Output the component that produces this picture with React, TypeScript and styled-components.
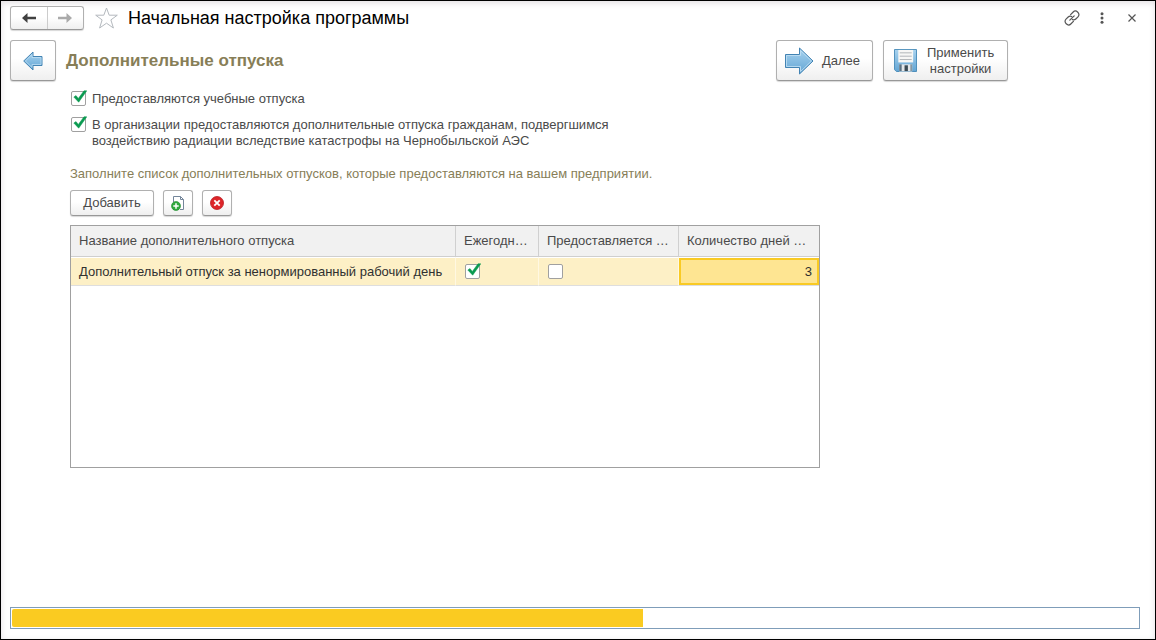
import React, { useState } from "react";
import styled, { createGlobalStyle, css } from "styled-components";

const GlobalStyle = createGlobalStyle`
  *, *::before, *::after { box-sizing: border-box; }
  body { margin: 0; background: #fff; }
  body, button, input { font-family: "Liberation Sans", Arial, sans-serif; font-size: 13px; line-height: 16px; color: #4a4a4a; }
`;

const Window = styled.div`
  display: flex;
  flex-direction: column;
  min-height: 100vh;
  padding: 5px 15px 10px 9px;
  border: 1px solid #000;
  background: #fff;
  box-shadow: inset 0 2px 6px #e2dfe2;
`;

const TitleBar = styled.header`
  display: flex;
  align-items: center;
  height: 24px;
`;

const buttonFace = css`
  border: 1px solid #b0b0b0;
  border-bottom-color: #989898;
  border-radius: 3px;
  background: linear-gradient(#fff 45%, #efefef);
  box-shadow: 0 1px 1px #d8d8d8;
  cursor: pointer;
`;

const History = styled.nav`
  ${buttonFace}
  display: flex;
  width: 74px;
  height: 24px;
`;

const HistoryButton = styled.button`
  display: flex;
  flex: 1;
  align-items: center;
  justify-content: center;
  padding: 0;
  border: 0;
  background: none;
  & + & { border-left: 1px solid #ccc; }
`;

const PlainButton = styled.button`
  display: flex;
  align-items: center;
  justify-content: center;
  width: 24px;
  height: 24px;
  padding: 0;
  border: 0;
  background: none;
`;

const Favorite = styled(PlainButton)`
  margin-left: 11px;
`;

const Title = styled.h1`
  flex: 1;
  margin: 0 0 0 9px;
  font-size: 18px;
  line-height: 24px;
  font-weight: normal;
  color: #000;
`;

const WindowTools = styled.div`
  display: flex;
  gap: 6px;
  margin-right: -4px;
`;

const Toolbar = styled.div`
  display: flex;
  align-items: center;
  gap: 10px;
  max-width: 998px;
  margin-top: 10px;
`;

const Button = styled.button<{ $w: number; $size?: "large" | "small" }>`
  ${buttonFace}
  display: flex;
  align-items: center;
  justify-content: center;
  gap: 8px;
  flex: none;
  width: ${(p) => p.$w}px;
  height: ${(p) => (p.$size === "large" ? 41 : 26)}px;
  padding: 0;
`;

const ActionButton = styled(Button)`
  justify-content: flex-start;
  padding-left: 7px;
`;

const SaveButton = styled(Button)`
  justify-content: flex-start;
  gap: 10px;
  padding-left: 10px;
`;

const ButtonText = styled.span`
  width: min-content;
  text-align: center;
`;

const Heading = styled.h2`
  flex: 1;
  margin: 0;
  font-size: 17px;
  line-height: 22px;
  color: #877e57;
`;

const Content = styled.main`
  flex: 1;
  max-width: 810px;
  padding: 10px 0 0 60px;
`;

const Option = styled.label`
  display: flex;
  gap: 6px;
  max-width: 560px;
  margin-bottom: 10px;
`;

const CheckFrame = styled.span`
  position: relative;
  display: block;
  flex: none;
  width: 16px;
  height: 16px;
`;

const CheckInput = styled.input`
  appearance: none;
  display: block;
  width: 15px;
  height: 15px;
  margin: 0 0 0 1px;
  border: 1px solid #a0a0a0;
  border-radius: 2px;
  background: #fff;
`;

const CheckMark = styled.svg`
  position: absolute;
  top: -1px;
  left: 1px;
  pointer-events: none;
`;

const Hint = styled.p`
  margin: 17px 0 8px;
  color: #877e57;
`;

const Commands = styled.div`
  display: flex;
  gap: 9px;
  margin-bottom: 9px;
`;

const Grid = styled.div`
  height: 243px;
  border: 1px solid #a0a0a0;
  background: #fff;
`;

const Table = styled.table`
  width: 100%;
  table-layout: fixed;
  border-collapse: separate;
  border-spacing: 0;
`;

const Column = styled.col<{ $w?: number }>`
  width: ${(p) => (p.$w ? `${p.$w}px` : "auto")};
`;

const HeadCell = styled.th`
  height: 31px;
  padding: 0 8px;
  border-right: 1px solid #d0d0d0;
  border-bottom: 1px solid #cfcfcf;
  background: #f1f1f1;
  font-weight: normal;
  text-align: left;
  white-space: nowrap;
  overflow: hidden;
  &:last-child { border-right: 0; }
`;

const Cell = styled.td`
  height: 29px;
  padding: 0 8px;
  border-top: 1px solid #fff;
  border-right: 1px solid #fff8e2;
  border-bottom: 1px solid #dedede;
  background: #fdf0c6;
  color: #303030;
  white-space: nowrap;
`;

const ActiveCell = styled(Cell)`
  padding: 0;
  border-right: 0;
  text-align: right;
`;

const ActiveValue = styled.div`
  padding: 4px 5px 3px;
  border: 2px solid #f9ca24;
  background: #fee592;
`;

const Progress = styled.div`
  height: 22px;
  padding: 1px;
  border: 1px solid #7f9db9;
  background: #fff;
`;

const ProgressFill = styled.div`
  height: 100%;
  border-radius: 2px 0 0 2px;
  background: #facb21;
`;

function Check({ initial = false, label }: { initial?: boolean; label?: string }) {
  const [checked, setChecked] = useState(initial);
  return (
    <CheckFrame>
      <CheckInput type="checkbox" aria-label={label} checked={checked} onChange={(e) => setChecked(e.target.checked)} />
      {checked && (
        <CheckMark width="16" height="15" viewBox="0 0 16 15" aria-hidden="true">
          <path d="M2.8 7 L5 5.6 L7.3 8.4 L13 .8 L15.8 .8 L7.7 12.2 Z" fill="#0a9a50" stroke="#0a9a50" strokeWidth="0.5" />
        </CheckMark>
      )}
    </CheckFrame>
  );
}

const SmallArrow = ({ back, color }: { back?: boolean; color: string }) => (
  <svg width="16" height="12" viewBox="0 0 16 12" aria-hidden="true">
    <path
      d={back ? "M1 6 L6.5 1 V4.8 H15 V7.2 H6.5 V11 Z" : "M15 6 L9.5 1 V4.8 H1 V7.2 H9.5 V11 Z"}
      fill={color}
    />
  </svg>
);

const BlueGradient = ({ id }: { id: string }) => (
  <defs>
    <linearGradient id={id} x1="0" y1="0" x2="0" y2="1">
      <stop offset="0" stopColor="#a9d3ef" />
      <stop offset="1" stopColor="#62a5d4" />
    </linearGradient>
  </defs>
);

const BackIcon = () => (
  <svg width="20" height="20" viewBox="0 0 20 20" aria-hidden="true">
    <BlueGradient id="backFill" />
    <path d="M.7 10 L10 1 V5.5 H19 V14.5 H10 V19 Z" fill="url(#backFill)" stroke="#4283b3" />
    <path d="M2.4 10 L9 3.6 V6.5 H18 V13.5 H9 V16.4 Z" fill="none" stroke="#c3e1f4" strokeWidth="0.7" />
  </svg>
);

const NextIcon = () => (
  <svg width="30" height="28" viewBox="0 0 30 28" aria-hidden="true">
    <BlueGradient id="nextFill" />
    <path d="M1.5 7.5 H15.5 V1 L29 14 L15.5 27 V20.5 H1.5 Z" fill="url(#nextFill)" stroke="#4283b3" />
    <path d="M2.5 8.5 H16.5 V3.5 L27.5 14 L16.5 24.5 V19.5 H2.5 Z" fill="none" stroke="#c3e1f4" strokeWidth="0.8" />
  </svg>
);

const SaveIcon = () => (
  <svg width="23" height="23" viewBox="0 0 24 24" aria-hidden="true">
    <BlueGradient id="saveFill" />
    <path d="M.5 .5 H23.5 V23.5 H2.5 L.5 21.5 Z" fill="url(#saveFill)" stroke="#4b8db9" />
    <path d="M4.5 1 H20 V14 H4.5 Z" fill="#f7f7f5" />
    <path d="M6 4 H18.5 M6 7.5 H18.5 M6 11 H18.5" stroke="#b0b4b6" />
    <path d="M5.5 16 H19 V23.5 H5.5 Z" fill="#e3e6e8" />
    <path d="M5.5 16 H8 V23 H5.5 Z" fill="#5a7284" />
    <path d="M11 17 H14.5 V23 H11 Z" fill="#3a4952" />
    <path d="M17 16 H19 V23 H17 Z" fill="#8798a4" />
  </svg>
);

const StarIcon = () => (
  <svg width="24" height="22" viewBox="0 0 24 22" aria-hidden="true">
    <path
      d="M11.5 1 L14.2 8.2 H22.3 L15.9 12.9 L18.4 21 L11.5 16.2 L4.6 21 L7.1 12.9 L.7 8.2 H8.8 Z"
      fill="#fff"
      stroke="#b4b9be"
    />
  </svg>
);

const LinkIcon = () => (
  <svg width="16" height="16" viewBox="0 0 16 16" fill="none" stroke="#555" strokeWidth="1.2" strokeLinecap="round" strokeLinejoin="round" aria-hidden="true">
    <path d="M6.6 4.6 L9.2 2 C12 -.8 17 3.8 14 6.8 L11.8 9 C10.8 10 9.2 10 8.3 9.5" />
    <path d="M9.4 11.4 L6.8 14 C4 16.8 -1 12.2 2 9.2 L4.2 7 C5.2 6 6.8 6 7.7 6.5" />
    <path d="M5.8 10.2 L10.2 5.8" />
  </svg>
);

const MenuIcon = () => (
  <svg width="4" height="12" viewBox="0 0 4 12" fill="#555" aria-hidden="true">
    <circle cx="2" cy="1.7" r="1.5" />
    <circle cx="2" cy="6" r="1.5" />
    <circle cx="2" cy="10.3" r="1.5" />
  </svg>
);

const CloseIcon = () => (
  <svg width="8" height="8" viewBox="0 0 8 8" stroke="#555" strokeWidth="1.2" aria-hidden="true">
    <path d="M.5 .5 L7.5 7.5 M7.5 .5 L.5 7.5" />
  </svg>
);

const CopyIcon = () => (
  <svg width="14" height="16" viewBox="0 0 14 16" aria-hidden="true">
    <path d="M2.5 7 V1.5 H9.5 L12.5 4.5 V14.5 H9" fill="#fff" stroke="#74869a" />
    <path d="M9.5 1.5 V4.5 H12.5" fill="none" stroke="#74869a" />
    <circle cx="5" cy="11" r="4.5" fill="#32a83e" stroke="#1e8c2e" strokeWidth="0.6" />
    <path d="M5 8.3 V13.7 M2.3 11 H7.7" stroke="#fff" strokeWidth="1.5" />
  </svg>
);

const DeleteIcon = () => (
  <svg width="14" height="14" viewBox="0 0 14 14" aria-hidden="true">
    <circle cx="7" cy="7" r="6.5" fill="#dd2529" stroke="#b9191f" strokeWidth="0.8" />
    <path d="M4.3 4.3 L9.7 9.7 M9.7 4.3 L4.3 9.7" stroke="#fff" strokeWidth="1.8" />
  </svg>
);

export default function App() {
  return (
    <>
      <GlobalStyle />
      <Window>
        <TitleBar>
          <History aria-label="История">
            <HistoryButton aria-label="Назад"><SmallArrow back color="#404040" /></HistoryButton>
            <HistoryButton aria-label="Вперед"><SmallArrow color="#aaa" /></HistoryButton>
          </History>
          <Favorite aria-label="В избранное"><StarIcon /></Favorite>
          <Title>Начальная настройка программы</Title>
          <WindowTools>
            <PlainButton aria-label="Ссылка"><LinkIcon /></PlainButton>
            <PlainButton aria-label="Меню"><MenuIcon /></PlainButton>
            <PlainButton aria-label="Закрыть"><CloseIcon /></PlainButton>
          </WindowTools>
        </TitleBar>

        <Toolbar>
          <Button $w={46} $size="large" aria-label="Предыдущий шаг"><BackIcon /></Button>
          <Heading>Дополнительные отпуска</Heading>
          <ActionButton $w={97} $size="large"><NextIcon /><ButtonText>Далее</ButtonText></ActionButton>
          <SaveButton $w={125} $size="large"><SaveIcon /><ButtonText>Применить настройки</ButtonText></SaveButton>
        </Toolbar>

        <Content>
          <Option>
            <Check initial />
            Предоставляются учебные отпуска
          </Option>
          <Option>
            <Check initial />
            В организации предоставляются дополнительные отпуска гражданам, подвергшимся воздействию радиации вследствие катастрофы на Чернобыльской АЭС
          </Option>
          <Hint>Заполните список дополнительных отпусков, которые предоставляются на вашем предприятии.</Hint>
          <Commands>
            <Button $w={84}>Добавить</Button>
            <Button $w={30} aria-label="Скопировать"><CopyIcon /></Button>
            <Button $w={30} aria-label="Удалить"><DeleteIcon /></Button>
          </Commands>
          <Grid>
            <Table>
              <colgroup>
                <Column />
                <Column $w={83} />
                <Column $w={140} />
                <Column $w={140} />
              </colgroup>
              <thead>
                <tr>
                  <HeadCell>Название дополнительного отпуска</HeadCell>
                  <HeadCell>Ежегодн…</HeadCell>
                  <HeadCell>Предоставляется …</HeadCell>
                  <HeadCell>Количество дней …</HeadCell>
                </tr>
              </thead>
              <tbody>
                <tr>
                  <Cell>Дополнительный отпуск за ненормированный рабочий день</Cell>
                  <Cell><Check initial label="Ежегодно" /></Cell>
                  <Cell><Check label="Предоставляется" /></Cell>
                  <ActiveCell><ActiveValue>3</ActiveValue></ActiveCell>
                </tr>
              </tbody>
            </Table>
          </Grid>
        </Content>

        <Progress role="progressbar" aria-label="Ход настройки" aria-valuenow={56} aria-valuemin={0} aria-valuemax={100}>
          <ProgressFill style={{ width: "56%" }} />
        </Progress>
      </Window>
    </>
  );
}
